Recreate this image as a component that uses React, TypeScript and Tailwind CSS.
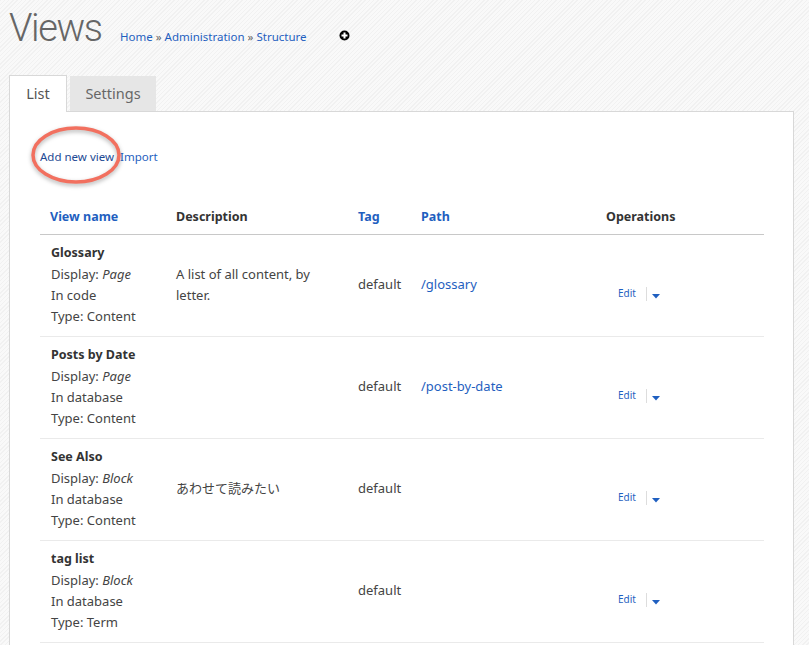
const rows = [
  { name: "Glossary", display: "Page", storage: "In code", type: "Content", description: "A list of all content, by letter.", path: "/glossary" },
  { name: "Posts by Date", display: "Page", storage: "In database", type: "Content", description: "", path: "/post-by-date" },
  { name: "See Also", display: "Block", storage: "In database", type: "Content", description: "あわせて読みたい", path: "" },
  { name: "tag list", display: "Block", storage: "In database", type: "Term", description: "", path: "" },
];

const columns = "grid grid-cols-[125px_182px_63px_185px_1fr] pl-[11px]";

function ViewRow({ row }: { row: (typeof rows)[number] }) {
  return (
    <div className={`${columns} h-[102px] border-b border-[#eaeaea] items-center text-[13px] text-[#444]`}>
      <div className="leading-[21px] -mt-[2px]">
        <div className="font-bold text-[12.5px] text-[#333] -mt-px mb-px">{row.name}</div>
        <div>
          Display: <em>{row.display}</em>
        </div>
        <div>{row.storage}</div>
        <div>Type: {row.type}</div>
      </div>
      <div className="leading-[21px] pr-3 -mt-[2px]">{row.description}</div>
      <div className="-mt-[2px]">default</div>
      <div className="text-[#1f5fc0] -mt-[2px]">{row.path}</div>
      <div className="flex items-center pl-3 pt-[16px]">
        <span className="text-[10px] text-[#1f5fc0] w-[28px]">Edit</span>
        <span className="w-px h-[14px] bg-[#ddd]" />
        <svg width="8" height="5" viewBox="0 0 8 5" className="ml-[5px] mt-[5px]">
          <path d="M0 0h8L4 4.500z" fill="#1f5fc0" />
        </svg>
      </div>
    </div>
  );
}

export default function App() {
  return (
    <div className="relative h-[645px] overflow-hidden font-['Noto_Sans','Noto_Sans_CJK_JP',sans-serif] bg-[repeating-linear-gradient(135deg,#f1f1f1_0,#f1f1f1_1px,#f9f9f9_1px,#f9f9f9_3px)]">
      <div className="h-[75px] pl-[9px] flex items-start">
        <h1 className="font-['Roboto',sans-serif] font-light text-[38px] tracking-[-1.400px] leading-[56px] w-[91px] text-[#666]">Views</h1>
        <div className="ml-[20px] mt-[28px] text-[11.5px] text-[#666] w-[215px]">
          <span className="text-[#1f5fc0]">Home</span> » <span className="text-[#1f5fc0]">Administration</span> » <span className="text-[#1f5fc0]">Structure</span>
        </div>
        <svg width="11" height="11" viewBox="0 0 11 11" className="ml-[4px] mt-[30px]">
          <circle cx="5.500" cy="5.500" r="5" fill="#000" />
          <path d="M4.500 2.500h2v2h2v2h-2v2h-2v-2h-2v-2h2z" fill="#fff" />
        </svg>
      </div>

      <div className="ml-[9px] flex items-end gap-[3px] h-[37px] relative z-10">
        <div className="w-[58px] h-[37px] bg-white border border-b-0 border-[#d8d8d8] text-[14.5px] text-[#555] flex items-center justify-center">List</div>
        <div className="w-[86px] h-[35px] mb-px bg-[#e6e6e6] text-[14.5px] text-[#666] flex items-center justify-center">Settings</div>
      </div>

      <div className="ml-[9px] w-[785px] -mt-px h-[600px] bg-white border border-[#d8d8d8] pl-[30px] pr-[29px]">
        <div className="pt-[36px] h-[91px] text-[11.5px] text-[#1f5fc0]">
          <span className="text-[#1d4a94]">Add new view</span> <span className="ml-[3px]">Import</span>
        </div>
        <div className={`${columns} h-[32px] pt-[5px] border-b border-[#c8c8c8] text-[12.5px] font-bold text-[#333]`}>
          <div className="text-[#1f5fc0] -ml-px">View name</div>
          <div>Description</div>
          <div className="text-[#1f5fc0]">Tag</div>
          <div className="text-[#1f5fc0]">Path</div>
          <div>Operations</div>
        </div>
        {rows.map((row) => (
          <ViewRow key={row.name} row={row} />
        ))}
      </div>

      {/* hand-drawn highlight over the link */}
      <svg width="100" height="70" viewBox="0 0 100 70" className="absolute left-[26px] top-[122px] drop-shadow-[0_2px_2px_rgba(0,0,0,0.3)]">
        <ellipse cx="50" cy="33" rx="43" ry="27" fill="none" stroke="#f2705f" strokeWidth="3.500" />
      </svg>
    </div>
  );
}
